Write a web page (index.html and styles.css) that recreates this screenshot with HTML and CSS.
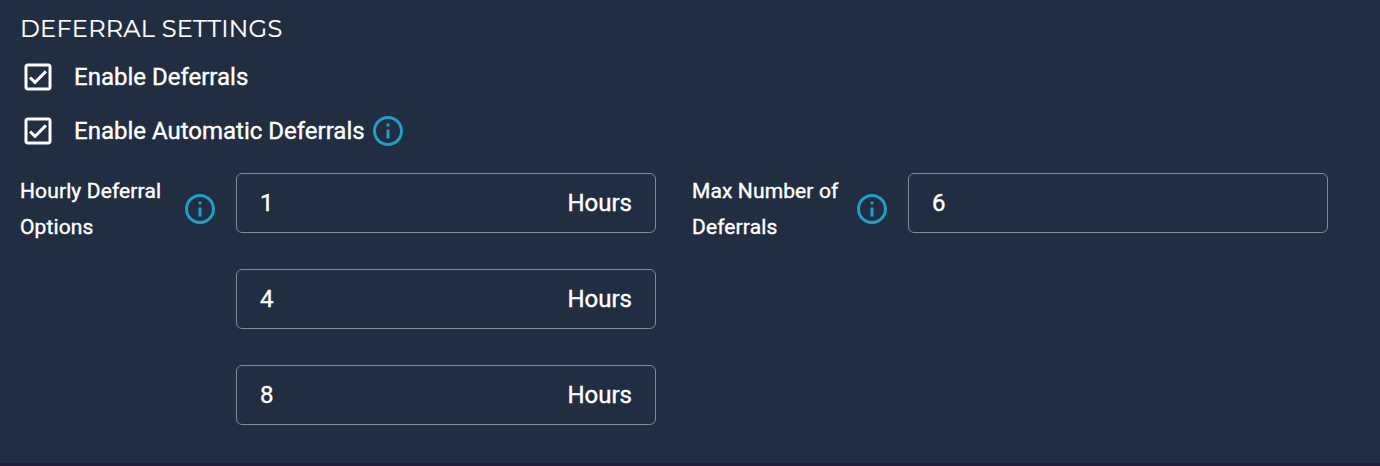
FILE: index.html
```html
<!DOCTYPE html>
<html lang="en">
<head>
<meta charset="utf-8">
<title>Deferral Settings</title>
<link rel="stylesheet" href="styles.css">
</head>
<body>
<svg class="defs" width="0" height="0">
  <symbol id="check" viewBox="0 0 24 24"><path d="M19 3H5c-1.100 0-2 .9-2 2v14c0 1.100.9 2 2 2h14c1.100 0 2-.9 2-2V5c0-1.100-.9-2-2-2zm0 16H5V5h14v14zM17.990 9l-1.410-1.420-6.590 6.590-2.580-2.570-1.420 1.410 4 3.990z"/></symbol>
  <symbol id="info" viewBox="0 0 24 24"><path d="M11 7h2v2h-2zm0 4h2v6h-2zm1-9C6.480 2 2 6.480 2 12s4.480 10 10 10 10-4.480 10-10S17.520 2 12 2zm0 18c-4.410 0-8-3.590-8-8s3.590-8 8-8 8 3.590 8 8-3.590 8-8 8z"/></symbol>
</svg>
<main class="panel">
  <h2 class="title">DEFERRAL SETTINGS</h2>
  <div class="option"><svg class="check"><use href="#check"/></svg><span class="option-text">Enable Deferrals</span></div>
  <div class="option"><svg class="check"><use href="#check"/></svg><span class="option-text auto">Enable Automatic Deferrals</span><svg class="info"><use href="#info"/></svg></div>
  <div class="fields">
    <div class="group">
      <div class="label"><span>Hourly Deferral<br>Options</span><svg class="info"><use href="#info"/></svg></div>
      <div class="inputs">
        <div class="input"><span>1</span><span>Hours</span></div>
        <div class="input"><span>4</span><span>Hours</span></div>
        <div class="input"><span>8</span><span>Hours</span></div>
      </div>
    </div>
    <div class="group">
      <div class="label"><span>Max Number of<br>Deferrals</span><svg class="info"><use href="#info"/></svg></div>
      <div class="inputs"><div class="input"><span>6</span></div></div>
    </div>
  </div>
</main>
</body>
</html>
```
FILE: styles.css
```css
* { box-sizing: border-box; }
body { margin: 0; background: #212d40; color: #fff; font-family: Roboto, sans-serif; -webkit-text-stroke: 0.4px #fff; }
.defs { display: none; }
.panel { height: 466px; padding: 10px 20px 0; border-bottom: 3px solid #1f2039; overflow: hidden; }
.title { margin: 0; height: 40px; font: 400 24px/37px Montserrat, "Open Sans", sans-serif; letter-spacing: 0.25px; white-space: nowrap; -webkit-text-stroke-width: 0.2px; }
.option { display: flex; align-items: center; height: 54px; font-size: 24px; white-space: nowrap; }
.check, .info { width: 36px; height: 36px; flex: none; -webkit-text-stroke: 0; stroke: none; }
.check { fill: #fff; margin-right: 18px; }
.info { fill: #219fc5; }
.auto { width: 290px; margin-right: 6px; }
.fields { display: flex; gap: 36px; padding-top: 15px; }
.group { display: flex; width: 636px; }
.label { display: flex; align-items: center; justify-content: space-between; width: 198px; height: 72px; margin-right: 18px; font-size: 21px; letter-spacing: 0.12px; line-height: 36px; white-space: nowrap; }
.inputs { display: flex; flex-direction: column; gap: 36px; }
.input { display: flex; align-items: center; justify-content: space-between; width: 420px; height: 60px; padding: 0 23px; border: 1px solid #7e8896; border-radius: 6px; font-size: 24px; }
```
